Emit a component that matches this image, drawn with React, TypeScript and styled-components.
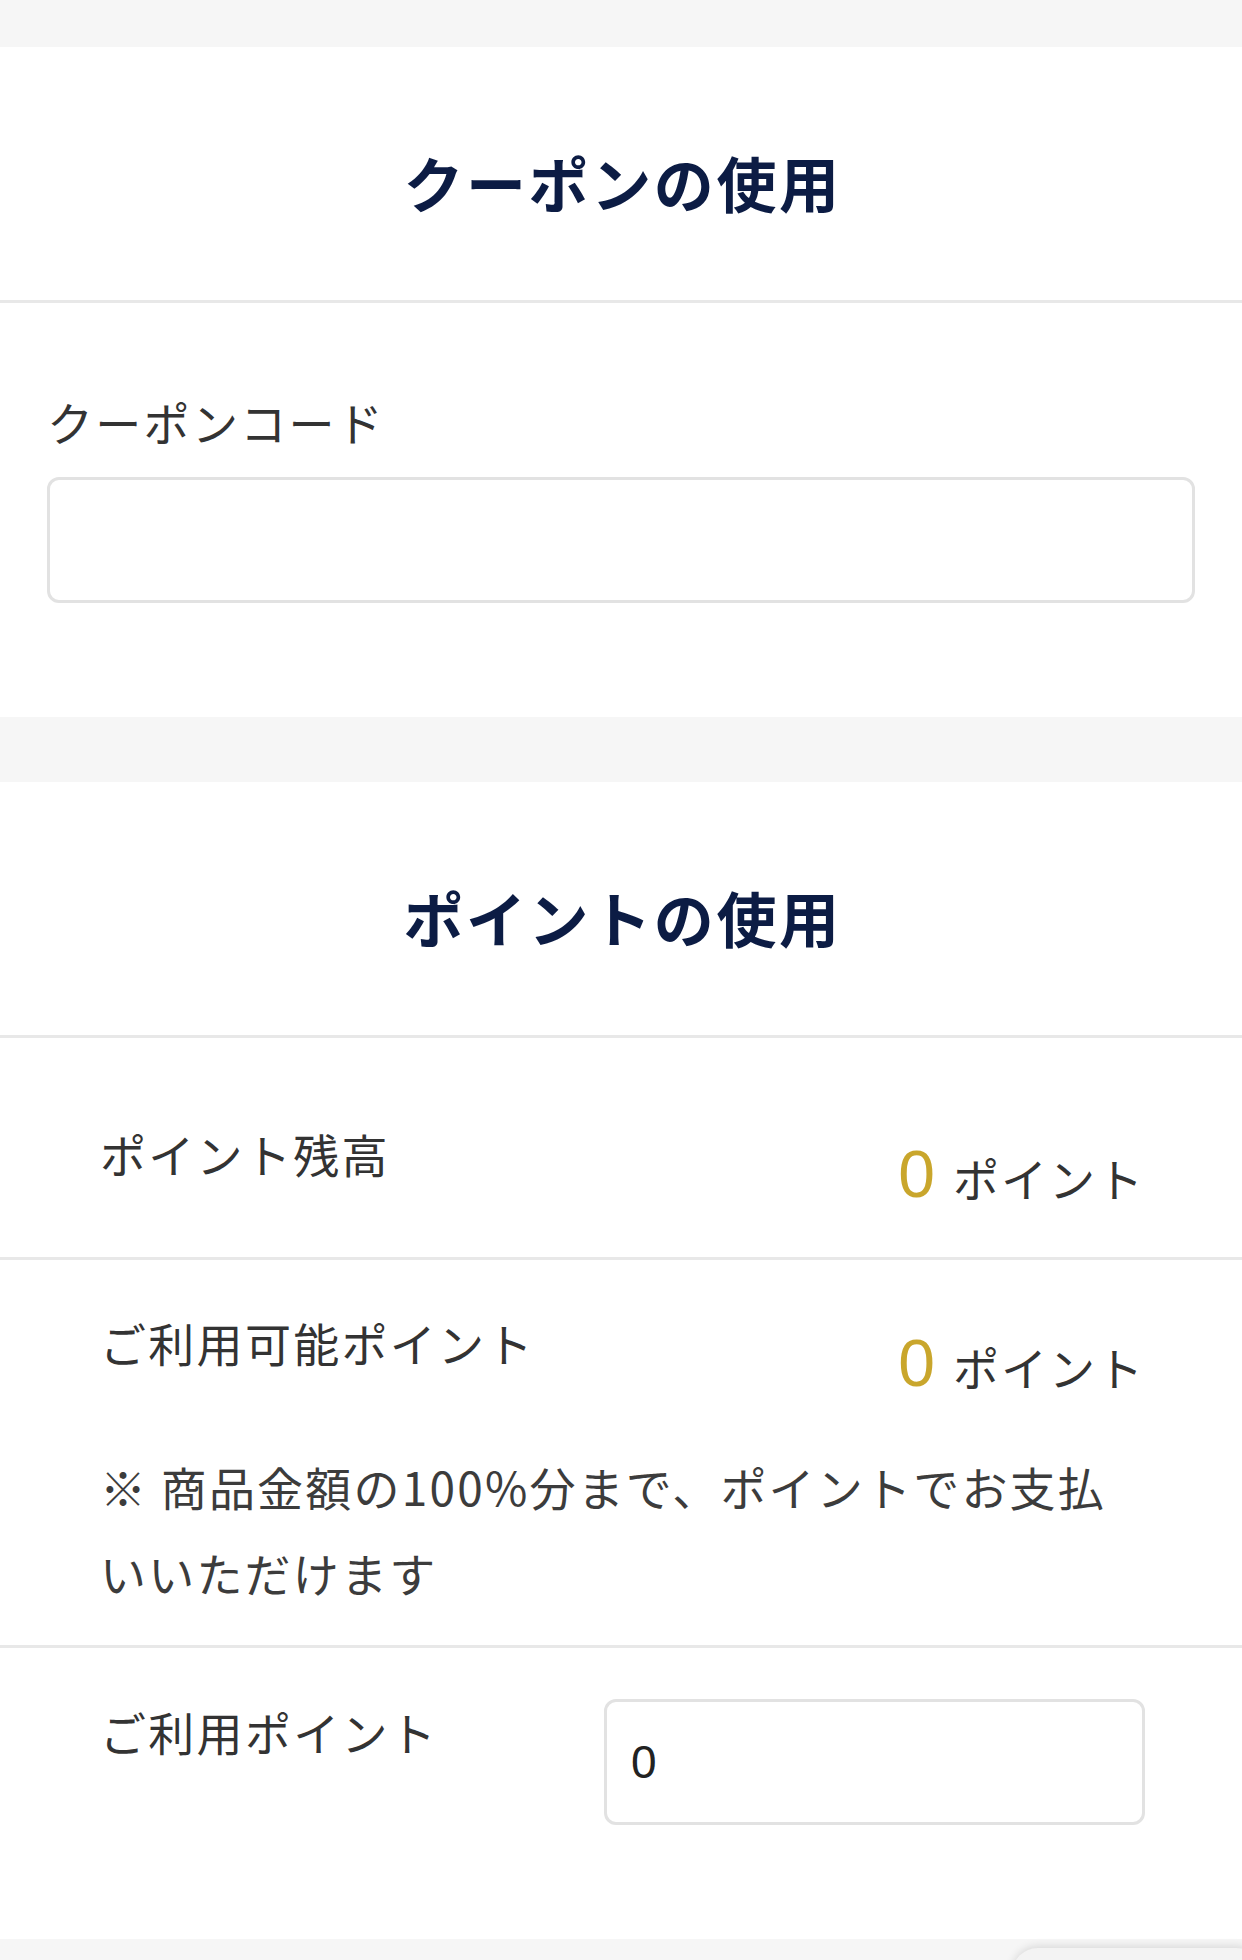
import React from "react";
import styled, { createGlobalStyle } from "styled-components";

const GlobalStyle = createGlobalStyle`
  html, body {
    margin: 0;
    padding: 0;
    background: #f6f6f6;
  }
  body {
    font-family: "Noto Sans CJK JP", "Noto Sans", sans-serif;
    color: #333333;
  }
  * { box-sizing: border-box; }
`;

const Page = styled.main`
  display: flex;
  flex-direction: column;
  gap: 65px;
  padding: 47px 0 23px;
  min-height: 1960px;
`;

const Section = styled.section`
  background: #ffffff;
`;

const SectionHeader = styled.header`
  padding: 93px 0 76px;
  border-bottom: 3px solid #e8e8e8;
  text-align: center;
`;

const Title = styled.h2`
  margin: 0;
  padding-left: 3px;
  font-family: "Noto Sans CJK JP", sans-serif;
  font-weight: 700;
  font-size: 60px;
  line-height: 84px;
  letter-spacing: 2.6px;
  color: #0c1c44;
`;

const CouponBody = styled.div`
  padding: 83px 47px 114px;
`;

const FieldLabel = styled.label`
  display: block;
  margin: 0;
  font-size: 46px;
  line-height: 70px;
  letter-spacing: 2.3px;
  color: #333333;
  white-space: nowrap;
`;

const TextInput = styled.input`
  display: block;
  width: 100%;
  height: 126px;
  margin-top: 21px;
  padding: 0 24px;
  border: 3px solid #e2e2e2;
  border-radius: 12px;
  background: #ffffff;
  font-family: "Liberation Sans", sans-serif;
  font-size: 46px;
  color: #222222;
  outline: none;
`;

const PointRow = styled.div<{ $top: number; $bottom: number; $last?: boolean }>`
  padding: ${(p) => p.$top}px 97px ${(p) => p.$bottom}px 100px;
  border-bottom: ${(p) => (p.$last ? "none" : "3px solid #e8e8e8")};
`;

const RowHead = styled.div`
  display: flex;
  justify-content: space-between;
  align-items: flex-start;
`;

const Value = styled.div`
  display: flex;
  align-items: baseline;
  margin-top: 21px;
`;

const Num = styled.span`
  font-family: "Liberation Sans", Arial, sans-serif;
  font-size: 66px;
  line-height: 70px;
  color: #c9a62c;
`;

const Unit = styled.span`
  margin-left: 18px;
  font-size: 46px;
  line-height: 70px;
  letter-spacing: 2px;
  color: #333333;
`;

const Note = styled.p`
  margin: 42px 0 0;
  font-size: 46px;
  line-height: 86px;
  letter-spacing: 2.2px;
  color: #3c3c3c;
`;

const PointsInput = styled(TextInput)`
  width: 541px;
  margin-top: 3px;
  flex: none;
`;

const FloatingEdge = styled.div`
  position: fixed;
  right: -20px;
  bottom: -40px;
  width: 250px;
  height: 52px;
  border-radius: 26px;
  background: #f3f3f3;
  box-shadow: 0 -2px 8px rgba(0, 0, 0, 0.12);
`;

type PointLineProps = { label: string; amount: number };

const PointLine: React.FC<PointLineProps> = ({ label, amount }) => (
  <RowHead>
    <FieldLabel as="div">{label}</FieldLabel>
    <Value>
      <Num>{amount}</Num>
      <Unit>ポイント</Unit>
    </Value>
  </RowHead>
);

export default function App() {
  return (
    <>
      <GlobalStyle />
      <Page>
        <Section>
          <SectionHeader>
            <Title>クーポンの使用</Title>
          </SectionHeader>
          <CouponBody>
            <FieldLabel htmlFor="coupon">クーポンコード</FieldLabel>
            <TextInput id="coupon" type="text" defaultValue="" />
          </CouponBody>
        </Section>

        <Section>
          <SectionHeader>
            <Title>ポイントの使用</Title>
          </SectionHeader>
          <PointRow $top={80} $bottom={45}>
            <PointLine label="ポイント残高" amount={0} />
          </PointRow>
          <PointRow $top={47} $bottom={30}>
            <PointLine label="ご利用可能ポイント" amount={0} />
            <Note>※ 商品金額の100%分まで、ポイントでお支払いいただけます</Note>
          </PointRow>
          <PointRow $top={48} $bottom={114} $last>
            <RowHead>
              <FieldLabel htmlFor="use-points">ご利用ポイント</FieldLabel>
              <PointsInput id="use-points" type="text" defaultValue="0" />
            </RowHead>
          </PointRow>
        </Section>
      </Page>
      <FloatingEdge />
    </>
  );
}
